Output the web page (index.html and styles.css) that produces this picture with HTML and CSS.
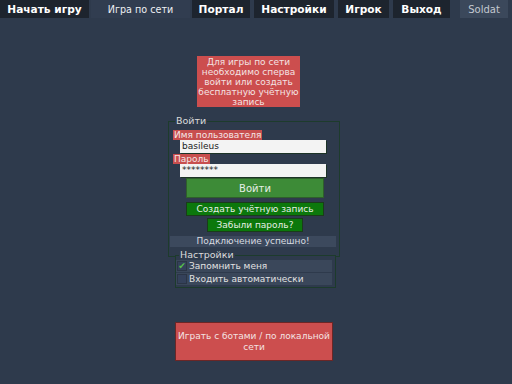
FILE: index.html
```html
<!DOCTYPE html>
<html lang="ru">
<head>
  <meta charset="UTF-8" />
  <title>Soldat - Игра по сети</title>
  <link rel="stylesheet" href="styles.css">
</head>
<body>
  <!-- Top menu tabs -->
  <nav class="tabs">
    <div class="tab tab-start">Начать игру</div>
    <div class="tab tab-online active">Игра по сети</div>
    <div class="tab tab-portal">Портал</div>
    <div class="tab tab-settings">Настройки</div>
    <div class="tab tab-player">Игрок</div>
    <div class="tab tab-exit">Выход</div>
    <div class="tab brand">Soldat</div>
  </nav>

  <main class="content">
    <div class="notice">
      Для игры по сети необходимо сперва войти или создать бесплатную учётную запись
    </div>

    <fieldset class="group login">
      <legend>Войти</legend>
      <div class="field-label">Имя пользователя</div>
      <div class="input">basileus</div>
      <div class="field-label second">Пароль</div>
      <div class="input">********</div>
      <button class="btn btn-login">Войти</button>
      <button class="btn btn-small btn-create">Создать учётную запись</button>
      <button class="btn btn-small btn-forgot">Забыли пароль?</button>
      <div class="status">Подключение успешно!</div>
    </fieldset>

    <fieldset class="group options">
      <legend>Настройки</legend>
      <label class="option"><span class="check checked">✔</span>Запомнить меня</label>
      <label class="option"><span class="check"></span>Входить автоматически</label>
    </fieldset>

    <button class="btn-offline">Играть с ботами / по локальной сети</button>
  </main>
</body>
</html>
```

FILE: styles.css
```css
body {
  margin: 0;
  width: 512px;
  height: 384px;
  overflow: hidden;
  background: #2e3a4c;
  font-family: 'DejaVu Sans', sans-serif;
  font-size: 9px;
  color: #e8e8e8;
}
/* Top tabs */
.tabs {
  display: flex;
  gap: 2px;
  height: 18px;
}
.tab {
  display: flex;
  align-items: center;
  justify-content: center;
  height: 18px;
  background: #1d242e;
  color: #fff;
  font-weight: bold;
  font-size: 10.6px;
}
.tab-start { width: 89px; }
.tab-online { width: 99px; }
.tab-portal { width: 58px; }
.tab-settings { width: 80px; margin-left: 2px; }
.tab-player { width: 51px; margin-left: 2px; }
.tab-exit { width: 57px; margin-left: 2px; }
.tab.active {
  background: #313d50;
  font-weight: normal;
  font-size: 9.6px;
  color: #eef0f3;
}
.tab.brand {
  width: 48px;
  margin-left: 8px;
  background: #3b485b;
  color: #c3c8d0;
  font-weight: normal;
  font-size: 10px;
}
/* Main column */
.content {
  display: flex;
  flex-direction: column;
  align-items: center;
}
.notice {
  width: 103px;
  height: 51px;
  margin: 38px 0 0 -15px;
  background: #cc4e4e;
  color: #f3e3e3;
  text-align: center;
  line-height: 10px;
  padding-top: 1px;
  box-sizing: border-box;
}
/* Group boxes */
.group {
  margin: 0;
  padding: 0;
  border: 1px solid #1d3b2c;
  background: #2e3a4c;
  box-sizing: border-box;
  display: flex;
  flex-direction: column;
  align-items: flex-start;
}
.group legend {
  padding: 0 1px;
  margin-left: 6px;
  color: #dcdcdc;
  font-size: 9.5px;
  line-height: 10px;
}
.login {
  width: 172px;
  margin: 9px 0 0 -4px;
  padding: 4px 0 9px 0;
}
.field-label {
  margin-left: 4px;
  background: #c84e4e;
  color: #f4e6e6;
  line-height: 10px;
  padding: 0 1px;
}
.field-label.second {
  margin-top: 1px;
}
.input {
  width: 146px;
  height: 13px;
  margin-left: 11px;
  background: #f3f3f3;
  color: #222;
  line-height: 13px;
  padding-left: 2px;
  box-sizing: border-box;
  box-shadow: 1px 1px 0 #1c3326;
}
.btn {
  font-family: inherit;
  border: 1px solid #1a3c1a;
  color: #e6efe6;
  cursor: pointer;
  padding: 0;
  box-sizing: border-box;
}
.btn-login {
  width: 138px;
  height: 20px;
  margin: 1px 0 0 17px;
  background: #3d8b37;
  border-color: #2f5f2b;
  font-size: 10px;
}
.btn-small {
  height: 14px;
  background: #0c780c;
  font-size: 9px;
  line-height: 12px;
}
.btn-create {
  width: 138px;
  margin: 4px 0 0 17px;
}
.btn-forgot {
  width: 96px;
  margin: 2px 0 0 38px;
}
.status {
  width: 166px;
  height: 11px;
  margin: 4px 0 0 1px;
  background: #3c495d;
  color: #d7dbe0;
  text-align: center;
  line-height: 11px;
}
.options {
  width: 161px;
  margin: -7px 0 0 -1px;
  padding: 0 0 1px 0;
}
.options legend {
  margin-left: 3px;
}
.option {
  display: flex;
  align-items: center;
  gap: 2px;
  width: 156px;
  height: 12px;
  margin-bottom: 1px;
  background: #3a475a;
  color: #e2e2e2;
}
.check {
  width: 10px;
  height: 10px;
  margin-left: 1px;
  background: #34415a;
  border: 1px solid #2b3546;
  box-sizing: border-box;
  color: #58c04a;
  font-size: 9px;
  line-height: 9px;
  text-align: center;
}
.btn-offline {
  width: 158px;
  height: 39px;
  margin: 34px 0 0 -4px;
  background: #cc4e4e;
  border: 1px solid #6b2626;
  color: #f3e3e3;
  font-family: inherit;
  font-size: 9px;
  line-height: 11px;
  padding: 0 2px;
  cursor: pointer;
}
```
